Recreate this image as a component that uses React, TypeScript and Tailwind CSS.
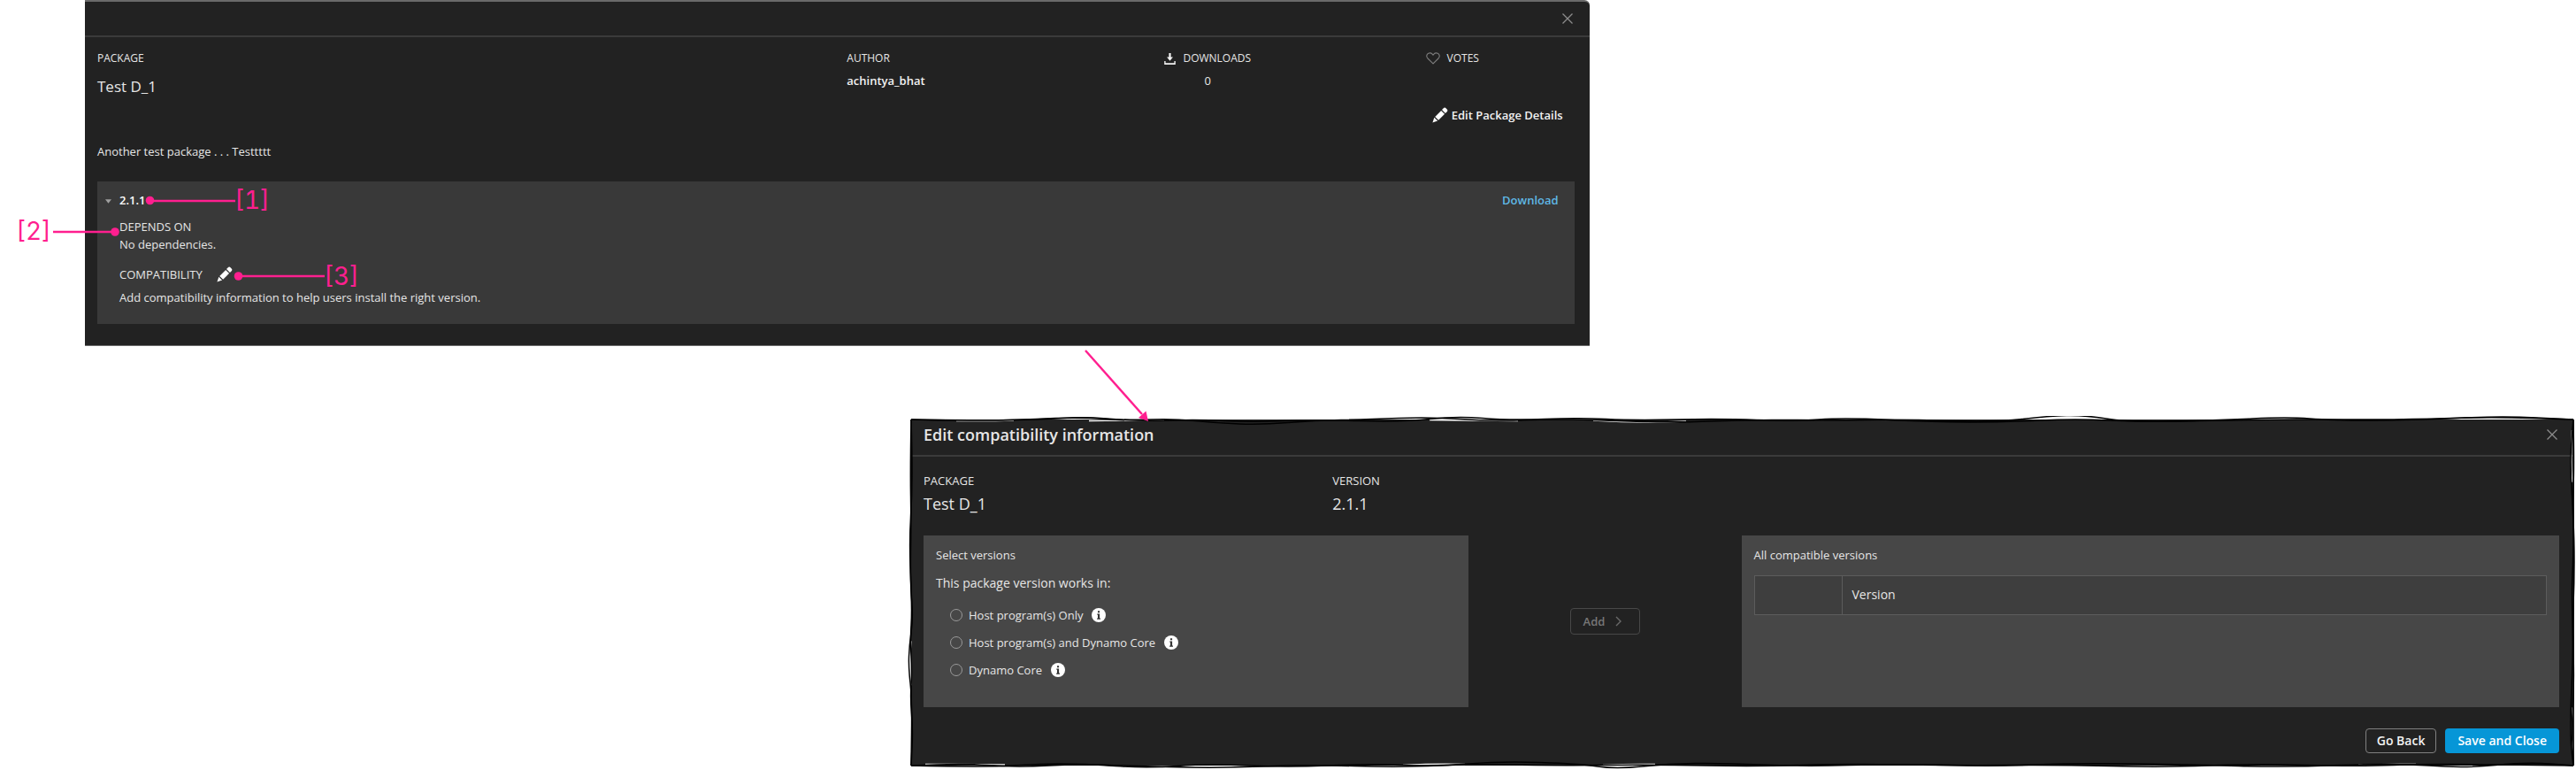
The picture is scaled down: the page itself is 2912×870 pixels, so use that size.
import type { ReactNode } from "react";

function PencilIcon() {
  return (
    <svg viewBox="0 0 18 18" className="size-[18px] shrink-0 fill-white" aria-hidden="true">
      <path d="M11 3.1 14.9 7l1.8-1.8a1.9 1.9 0 0 0 0-2.7l-1.2-1.2a1.9 1.9 0 0 0-2.7 0z" />
      <path d="M10.2 3.9 3.2 10.9l3.9 3.9 7-7z" />
      <path d="M2.4 11.8.4 17.6l5.8-2z" />
      <path d="m10.300 3.500 4.300 4.300M2.700 11.300l4 4" stroke="#2a2a2a" strokeWidth="0.7" />
    </svg>
  );
}

function CloseIcon() {
  return (
    <svg viewBox="0 0 14 14" className="size-[14px] fill-none stroke-[#8c8c8c]" strokeWidth="1.3" aria-hidden="true">
      <path d="M1.500 1.500l11 11M12.500 1.500l-11 11" />
    </svg>
  );
}

function DownloadIcon() {
  return (
    <svg viewBox="0 0 13 13" className="mt-px size-[13px] shrink-0 fill-[#f2f2f2]" aria-hidden="true">
      <path d="M5.400 0h2.200v4.500H10L6.500 8.700 3 4.500h2.400z" />
      <path d="M.2 9h1.400v2.200h9.800V9h1.400v3.900H.2z" />
    </svg>
  );
}

function HeartIcon() {
  return (
    <svg viewBox="0 0 16 14" className="h-[14px] w-4 shrink-0 fill-none stroke-[#7d7d7d]" strokeWidth="1.1" aria-hidden="true">
      <path d="M8 12.900 2 7C.7 5.600.5 3.600 1.600 2.200 3 .500 5.700.5 7.100 2.100L8 3.200l.9-1.100C10.300.5 13 .5 14.400 2.200c1.100 1.400.9 3.400-.4 4.800z" />
    </svg>
  );
}

function InfoIcon() {
  return (
    <svg viewBox="0 0 16 16" className="size-4 shrink-0" aria-hidden="true">
      <circle cx="8" cy="8" r="8" fill="#fff" />
      <path d="M7 3.200h2.100v2H7zM6.300 6.500h2.800v4.900h.9v1.300H6.100v-1.300H7V7.800h-.7z" fill="#333" />
    </svg>
  );
}

function Callout({ className, children }: { className: string; children: ReactNode }) {
  return (
    <span
      className={`absolute font-['Inter',sans-serif] text-[28px] leading-8 font-normal text-[#ff1f8f] tabular-nums ${className}`}
    >
      {children}
    </span>
  );
}

function CalloutLines() {
  return (
    <svg
      className="pointer-events-none absolute top-0 left-0 h-[480px] w-[1400px]"
      viewBox="0 0 1400 480"
      fill="#ff1f8f"
      stroke="none"
      aria-hidden="true"
    >
      <g stroke="#ff1f8f" strokeWidth="2.4">
        <path d="M170 227h96M60 262h70M270 312h97" />
        <path d="M1227 396l64 72" />
      </g>
      <circle cx="169.500" cy="226.500" r="4.800" />
      <circle cx="130" cy="262" r="4.800" />
      <circle cx="269.500" cy="312" r="4.800" />
      <path d="M1298 476l-11-4 8.500-7.500z" />
    </svg>
  );
}

type Point = [number, number];

/* Rounds a hand-drawn outline by curving through the midpoint of each segment. */
function smooth(points: Point[]) {
  const last = points[points.length - 1];
  let d = `M${points[0][0]} ${points[0][1]}`;
  for (let i = 1; i < points.length - 1; i++) {
    const [x, y] = points[i];
    const [nx, ny] = points[i + 1];
    d += `Q${x} ${y} ${(x + nx) / 2} ${(y + ny) / 2}`;
  }
  return `${d}L${last[0]} ${last[1]}`;
}

const strokes: Point[][] = [
  [[4, 4], [80, 5], [150, 4], [200, 1], [250, 5], [300, 3], [350, 8], [400, 10], [460, 5], [520, 4], [590, 1], [660, 6], [740, 3], [860, 8], [950, 4], [1040, 5], [1130, 4], [1230, 7], [1290, 0], [1330, -1], [1380, 7], [1480, 5], [1560, 1], [1610, 5], [1700, 5], [1800, 0], [1883, 4]],
  [[4, 4], [100, 6], [190, 1], [260, 6], [330, 4], [390, 7], [460, 4], [560, 7], [620, 0], [680, 5], [760, 2], [820, 5], [920, 3], [1000, 6], [1060, 2], [1160, 7], [1240, 7], [1320, 3], [1400, 7], [1520, 4], [1620, 4], [1700, 4], [1790, 1], [1883, 4]],
  [[4, 396], [60, 393], [120, 398], [200, 394], [270, 399], [340, 394], [430, 398], [520, 394], [600, 397], [670, 391], [760, 394], [800, 400], [860, 394], [920, 393], [1010, 397], [1120, 394], [1230, 397], [1320, 393], [1450, 395], [1560, 398], [1680, 393], [1760, 399], [1830, 392], [1883, 396]],
  [[4, 396], [100, 398], [160, 393], [240, 396], [350, 399], [450, 395], [560, 398], [640, 394], [720, 396], [850, 395], [960, 397], [1060, 394], [1190, 396], [1300, 395], [1420, 398], [1520, 394], [1640, 397], [1720, 394], [1883, 396]],
  [[4, 4], [5, 40], [5, 90], [2, 140], [4, 200], [6, 230], [2, 260], [1, 285], [5, 320], [4, 396]],
  [[4, 4], [3, 60], [4, 120], [3, 180], [5, 220], [3, 255], [5, 290], [3, 320], [6, 355], [4, 396]],
  [[1883, 4], [1880, 35], [1880, 70], [1883, 110], [1883, 160], [1881, 200], [1883, 260], [1880, 330], [1880, 370], [1883, 396]],
  [[1883, 4], [1884, 60], [1882, 100], [1884, 140], [1884, 190], [1882, 240], [1884, 300], [1881, 350], [1883, 396]],
];

function SketchFrame() {
  return (
    <svg
      className="pointer-events-none absolute -inset-1 h-[calc(100%+8px)] w-[calc(100%+6px)]"
      viewBox="0 0 1886 400"
      preserveAspectRatio="none"
      fill="none"
      aria-hidden="true"
    >
      <path
        d="M55 5.500Q90 6 120 5M205 5.500Q240 5.500 290 4.500M590 4.500Q640 5 690 5.500M775 5Q830 8.500 880 6M20 394.500Q70 394 110 395M560 395.500Q600 393.500 630 394.500M786 395.500Q815 394 845 394.500M1640 395Q1680 394 1705 394.500M4 255Q1.500 280 4 305M1881.500 16Q1880 45 1881.500 75M1882 330Q1880.500 355 1882 380"
        stroke="#fff"
        strokeWidth="1.300"
      />
      {strokes.map((points, i) => (
        <path key={i} d={smooth(points)} stroke="#000" strokeWidth="1.500" />
      ))}
    </svg>
  );
}

function PackageDetails() {
  return (
    <section className="ml-24 w-[58.4%] rounded-tr-md border-t-2 border-b border-t-[#6a6a6a] border-b-[#6a6a6a] bg-[#222222]">
      <header className="flex h-10 items-center justify-end border-b-2 border-[#3b3b3b] pr-4">
        <button type="button" aria-label="Close package details" className="px-0.5">
          <CloseIcon />
        </button>
      </header>
      <div className="pt-[14px] pr-[17px] pb-6 pl-[14px]">
        <div className="grid min-h-[54px] grid-cols-[847fr_359fr_295fr_168fr] items-start text-xs leading-5">
          <div>
            <h2>PACKAGE</h2>
            <p className="mt-[10px] text-[17px] leading-6">Test D_1</p>
          </div>
          <div>
            <h2>AUTHOR</h2>
            <p className="mt-[5px] text-[13px] font-semibold text-[#f2f2f2]">achintya_bhat</p>
          </div>
          <div className="justify-self-start text-center">
            <h2 className="flex items-center gap-2">
              <DownloadIcon />
              DOWNLOADS
            </h2>
            <p className="mt-[5px] text-[13px]">0</p>
          </div>
          <h2 className="flex items-center gap-2">
            <HeartIcon />
            VOTES
          </h2>
        </div>
        <div className="mt-[10px] flex justify-end pr-[13px]">
          <button type="button" className="flex items-center gap-1 text-[13px] leading-5 font-semibold text-[#f2f2f2]">
            <PencilIcon />
            Edit Package Details
          </button>
        </div>
        <p className="mt-[21px] text-[13px] leading-5">Another test package . . . Testtttt</p>

        <div className="mt-6 bg-[#393939] pt-[11px] pr-[18px] pb-5 pl-2 text-[13px] leading-5">
          <div className="flex justify-between">
            <button type="button" className="flex items-center gap-[9px] text-[13px] font-semibold text-white">
              <svg viewBox="0 0 8 5" className="mt-0.5 ml-px h-[5px] w-[7px] fill-[#a0a0a0]" aria-hidden="true">
                <path d="M0 0h8L4 5z" />
              </svg>
              2.1.1
            </button>
            <a href="#download" className="font-semibold text-[#5fb8e6]">
              Download
            </a>
          </div>
          <div className="pl-[17px]">
            <h3 className="mt-[10px] text-[13px]">DEPENDS ON</h3>
            <p>No dependencies.</p>
            <div className="mt-[14px] flex items-center gap-4">
              <h3 className="text-[13px]">COMPATIBILITY</h3>
              <button type="button" aria-label="Edit compatibility">
                <PencilIcon />
              </button>
            </div>
            <p className="mt-[6px]">Add compatibility information to help users install the right version.</p>
          </div>
        </div>
      </div>
    </section>
  );
}

const hosts = ["Host program(s) Only", "Host program(s) and Dynamo Core", "Dynamo Core"];

function EditCompatibility() {
  return (
    <section className="relative mt-[83px] mr-[2px] ml-auto w-[64.56%] bg-[#222222]">
      <header className="flex items-center justify-between border-b-2 border-[#3b3b3b] pt-[5px] pr-4 pb-[11px] pl-[14px]">
        <h1 className="text-lg leading-6 font-semibold">Edit compatibility information</h1>
        <button type="button" aria-label="Close editor" className="px-0.5">
          <CloseIcon />
        </button>
      </header>
      <div className="pt-[17px] pr-[17px] pb-[14px] pl-[14px]">
        <div className="grid grid-cols-4">
          <div>
            <h2 className="text-[13px] leading-5">PACKAGE</h2>
            <p className="mt-1 text-lg leading-6">Test D_1</p>
          </div>
          <div>
            <h2 className="text-[13px] leading-5">VERSION</h2>
            <p className="mt-1 text-lg leading-6">2.1.1</p>
          </div>
        </div>

        <div className="mt-6 grid grid-cols-[2fr_1fr_3fr] text-[13px] leading-5">
          <fieldset className="bg-[#474747] px-[14px] pt-3 pb-8">
            <p>Select versions</p>
            <p className="mt-3 text-sm leading-5">This package version works in:</p>
            <div className="mt-4 flex flex-col gap-[11px] pl-4">
              {hosts.map((host) => (
                <div key={host} className="flex items-center gap-[10px]">
                  <label className="flex items-center gap-[7px]">
                    <input
                      type="radio"
                      name="host"
                      className="size-[14px] appearance-none rounded-full border border-[#9a9a9a] checked:bg-[#9a9a9a]"
                    />
                    {host}
                  </label>
                  <InfoIcon />
                </div>
              ))}
            </div>
          </fieldset>

          <div className="flex items-center justify-center">
            <button
              type="button"
              disabled
              className="flex h-[30px] items-center gap-3 rounded-sm border border-[#484848] pr-5 pl-[14px] font-semibold text-[#777777]"
            >
              Add
              <svg viewBox="0 0 7 12" className="h-3 w-[7px] fill-none stroke-[#6a6a6a]" strokeWidth="1.400" aria-hidden="true">
                <path d="M1 1l5 5-5 5" />
              </svg>
            </button>
          </div>

          <div className="bg-[#474747] px-[14px] pt-3 pb-8">
            <p id="versions-title">All compatible versions</p>
            <table aria-labelledby="versions-title" className="mt-[13px] h-[45px] w-full border-collapse bg-[#3e3e3e]">
              <thead>
                <tr>
                  <td className="w-[99px] border border-[#5c5c5c]"></td>
                  <th scope="col" className="border border-[#5c5c5c] px-[11px] pb-0.5 text-left text-sm font-normal">
                    Version
                  </th>
                </tr>
              </thead>
            </table>
          </div>
        </div>

        <div className="mt-6 flex justify-end gap-[10px] text-sm leading-5 font-semibold text-[#f2f2f2]">
          <button type="button" className="h-7 rounded-sm border border-[#808080] px-3">
            Go Back
          </button>
          <button type="button" className="h-7 rounded-sm bg-[#0696d7] px-[14px] text-white">
            Save and Close
          </button>
        </div>
      </div>
      <SketchFrame />
    </section>
  );
}

export default function App() {
  return (
    <main className="relative overflow-hidden bg-white pb-1 font-['Open_Sans','Noto_Sans',sans-serif] text-[#e6e6e6]">
      <PackageDetails />
      <EditCompatibility />
      <CalloutLines />
      <Callout className="top-[210px] left-[265px]">[1]</Callout>
      <Callout className="top-[245px] left-[18px]">[2]</Callout>
      <Callout className="top-[296px] left-[366px]">[3]</Callout>
    </main>
  );
}
